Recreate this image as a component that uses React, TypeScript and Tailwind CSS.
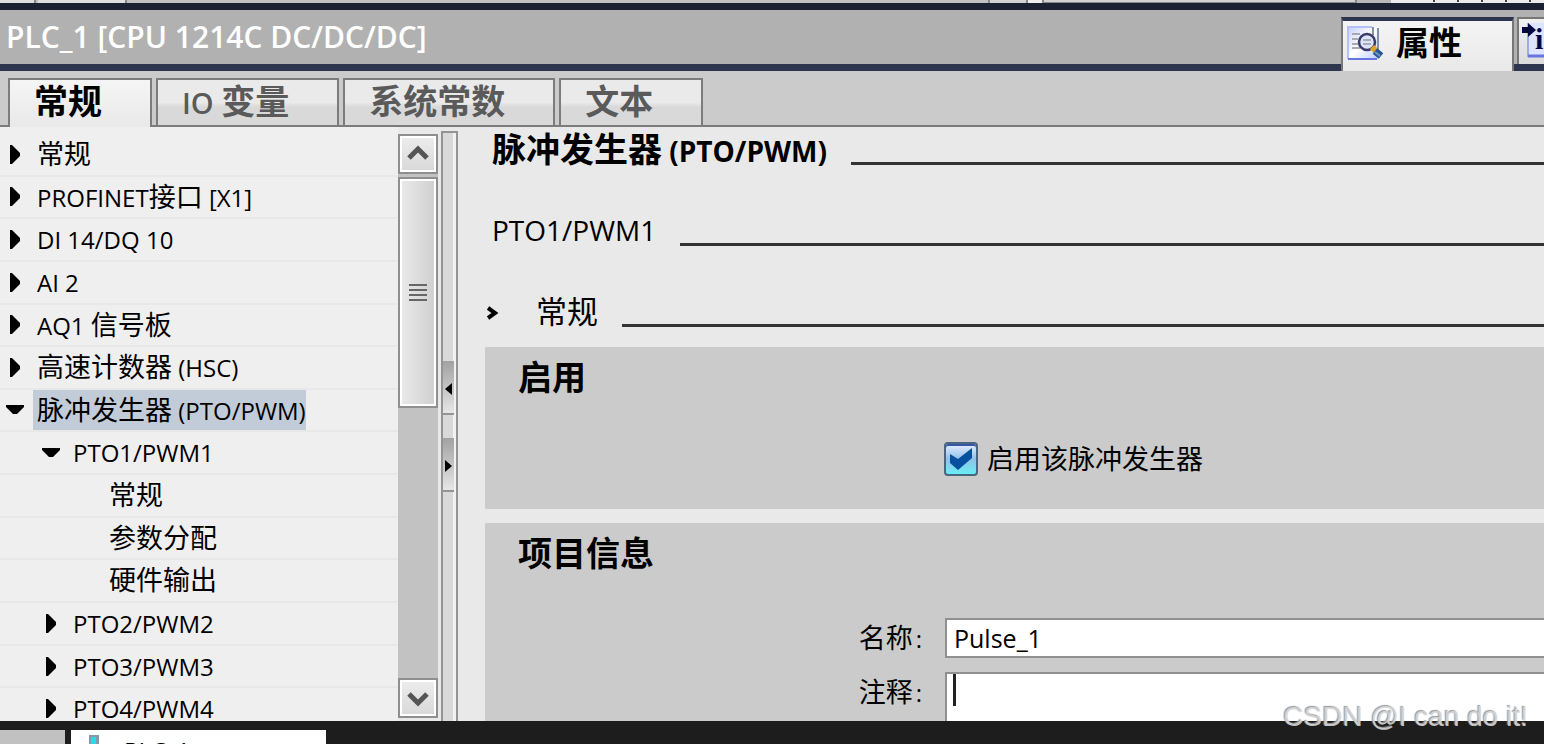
import { useState } from 'react';
import type { ReactNode } from 'react';

type TreeItem = { id: string; text: string; level: 0 | 1 | 2; state: 'closed' | 'open' | 'leaf' };

const treeItems: TreeItem[] = [
  { id: 'general', text: '常规', level: 0, state: 'closed' },
  { id: 'profinet', text: 'PROFINET接口 [X1]', level: 0, state: 'closed' },
  { id: 'di', text: 'DI 14/DQ 10', level: 0, state: 'closed' },
  { id: 'ai', text: 'AI 2', level: 0, state: 'closed' },
  { id: 'aq', text: 'AQ1 信号板', level: 0, state: 'closed' },
  { id: 'hsc', text: '高速计数器 (HSC)', level: 0, state: 'closed' },
  { id: 'pulse', text: '脉冲发生器 (PTO/PWM)', level: 0, state: 'open' },
  { id: 'pto1', text: 'PTO1/PWM1', level: 1, state: 'open' },
  { id: 'pto1-general', text: '常规', level: 2, state: 'leaf' },
  { id: 'pto1-params', text: '参数分配', level: 2, state: 'leaf' },
  { id: 'pto1-hw', text: '硬件输出', level: 2, state: 'leaf' },
  { id: 'pto2', text: 'PTO2/PWM2', level: 1, state: 'closed' },
  { id: 'pto3', text: 'PTO3/PWM3', level: 1, state: 'closed' },
  { id: 'pto4', text: 'PTO4/PWM4', level: 1, state: 'closed' },
];

const tabs = ['常规', 'IO 变量', '系统常数', '文本'];
const indents = ['pl-[10px]', 'pl-[46px]', 'pl-[82px]'];

export default function App() {
  return (
    <div className="relative flex h-screen flex-col overflow-hidden bg-[#e9e9e9] font-['Open_Sans','Noto_Sans_CJK_SC',sans-serif] text-black">
      <ToolbarEdge />
      <TitleBar />
      <TabRow />
      <main className="flex min-h-0 flex-1">
        <Navigation />
        <Splitter />
        <Settings />
      </main>
      <TaskStrip />
      <p className="pointer-events-none absolute right-4 bottom-3 font-['Liberation_Sans',sans-serif] text-[28px] leading-[30px] text-[#d6d6d6]/90 [text-shadow:-1px_-1px_1px_#9a9a9a]">
        CSDN @I can do it!
      </p>
    </div>
  );
}

// Latin runs are set smaller than the Chinese ones beside them
function Mixed({ text, latin }: { text: string; latin: string }) {
  return (
    <>
      {text.split(/([\u4e00-\u9fff]+)/).filter(Boolean).map((part, i) => (
        <span key={i} className={/[\u4e00-\u9fff]/.test(part) ? undefined : latin}>{part}</span>
      ))}
    </>
  );
}

function ToolbarEdge() {
  return (
    <div className="flex h-[10px] shrink-0 border-b-[7px] border-[#1b2033] bg-[#c1c1c1]">
      <div className="w-9 border-r-2 border-[#888] bg-[#dedede]" />
      <div className="ml-[2px] w-[89px] border-r-2 border-[#888] bg-[#dedede]" />
      <div className="flex-1" />
      <div className="w-[40px] border-x-2 border-[#888] bg-[#d2d2d2]" />
      <div className="w-[14px] bg-[#eee]" />
      <div className="w-[315px] border-x-2 border-b border-[#888] bg-[#d2d2d2]" />
      <div className="w-[34px] bg-[#b8b8b8]" />
      <div className="flex w-[153px] items-start gap-[22px] bg-[#ececec] pl-[42px]">
        {[0, 1, 2, 3, 4].map((n) => <i key={n} className="h-[2px] w-[2px] shrink-0 bg-[#444]" />)}
      </div>
    </div>
  );
}

function TitleBar() {
  return (
    <header className="flex h-[61px] shrink-0 items-end border-b-[7px] border-[#2d354f] bg-[#b1b1b1]">
      <h1 className="flex-1 self-center pl-[6px] text-[30px] leading-[54px] font-semibold whitespace-nowrap text-white">PLC_1 [CPU 1214C DC/DC/DC]</h1>
      <button type="button" className="relative -mb-[7px] flex h-[54px] w-[173px] shrink-0 items-center gap-[12px] border-x-2 border-t-4 border-x-[#777] border-t-[#2d354f] bg-linear-to-b from-[#f4f4f4] to-[#e9e9e9] pb-[6px] pl-[4px]">
        <PropertiesIcon />
        <span className="text-[33px] leading-[44px] font-bold">属性</span>
      </button>
      <button type="button" aria-label="信息" className="ml-[3px] flex h-[47px] w-[27px] shrink-0 overflow-hidden border-t-2 border-l-2 border-[#777] bg-linear-to-b from-[#f0f0f0] to-[#dcdcdc] pt-[2px] pl-[3px]">
        <InfoIcon />
      </button>
    </header>
  );
}

function TabRow() {
  const [active, setActive] = useState('常规');
  return (
    <nav className="flex h-[56px] shrink-0 items-end gap-[4px] border-b-2 border-[#7c7c7c] bg-[#cbcbcb] pl-[8px]">
      {tabs.map((tab) => (
        <button
          key={tab}
          type="button"
          onClick={() => setActive(tab)}
          className={`relative border-2 border-b-0 border-[#7c7c7c] pr-[48px] pl-[24px] text-[34px] leading-[42px] font-bold whitespace-nowrap ${tab === active ? '-mb-[2px] h-[49px] bg-linear-to-b from-[#f5f5f5] to-[#e9e9e9] pb-[5px] text-black' : 'h-[47px] bg-linear-to-b from-[#eaeaea] from-50% to-[#d9d9d9] to-60% pb-[3px] text-[#5a5a5a]'}`}
        >
          <Mixed text={tab} latin="text-[29px] font-semibold" />
        </button>
      ))}
    </nav>
  );
}

function Arrow({ state }: { state: TreeItem['state'] }) {
  if (state === 'leaf') return <span className="w-[23px] shrink-0" />;
  return (
    <span className="flex w-[23px] shrink-0 items-center">
      {state === 'open' ? (
        <svg width="20" height="10" viewBox="0 0 20 10" className="-ml-[4px]"><path d="M0 0h18v2l-7 7H7L0 2z" /></svg>
      ) : (
        <svg width="10" height="19" viewBox="0 0 10 19"><path d="M0 0h2l8 8v3l-8 8H0z" /></svg>
      )}
    </span>
  );
}

function Navigation() {
  const [selected, setSelected] = useState('pulse');
  return (
    <aside className="flex w-[438px] shrink-0 overflow-hidden">
      <ul className="-mb-[10px] flex flex-1 flex-col bg-[#efefef] pt-[7px]">
        {treeItems.map((item) => (
          <li key={item.id} className={`flex min-h-0 flex-1 items-stretch border-b-2 border-[#e8e8e8] ${indents[item.level]}`}>
            <button type="button" onClick={() => setSelected(item.id)} className="flex items-stretch text-[27px] leading-[40px] whitespace-nowrap">
              <Arrow state={item.state} />
              <span className={`h-[40px] pl-[4px] ${item.id === selected ? 'bg-[#c2ccd8]' : ''}`}>
                <Mixed text={item.text} latin="text-[24px]" />
              </span>
            </button>
          </li>
        ))}
      </ul>
      <div className="mt-[7px] mb-[3px] flex w-[40px] flex-col bg-[#c2c2c2]">
        <ScrollButton label="向上滚动" path="M3 15l9-9 9 9" />
        <div className="mt-[3px] flex h-[231px] flex-col items-center justify-center gap-[3px] border-2 border-[#8f8f8f] bg-linear-to-r from-[#eaeaea] to-[#cfcfcf] outline-2 -outline-offset-4 outline-white">
          {[0, 1, 2, 3].map((n) => <i key={n} className="h-[2px] w-[18px] bg-[#666]" />)}
        </div>
        <div className="flex-1" />
        <ScrollButton label="向下滚动" path="M3 7l9 9 9-9" />
      </div>
    </aside>
  );
}

function ScrollButton({ label, path }: { label: string; path: string }) {
  return (
    <button type="button" aria-label={label} className="flex h-[40px] w-[40px] shrink-0 items-center justify-center border-2 border-[#8f8f8f] bg-linear-to-b from-[#ededed] to-[#d8d8d8] outline-2 -outline-offset-4 outline-white">
      <svg width="24" height="22" viewBox="0 0 24 22" fill="none" stroke="#555" strokeWidth="5"><path d={path} /></svg>
    </button>
  );
}

function Splitter() {
  return (
    <div className="mt-[4px] ml-[3px] flex w-[17px] shrink-0 flex-col border-x-2 border-t-2 border-[#949494] bg-[#d9d9d9] pt-[228px] shadow-[inset_-3px_0_0_#f2f2f2]">
      <SplitButton label="收起" path="M7 0v12L0 6z" />
      <div className="h-[23px]" />
      <SplitButton label="展开" path="M0 0v12l7-6z" />
    </div>
  );
}

function SplitButton({ label, path }: { label: string; path: string }) {
  return (
    <button type="button" aria-label={label} className="flex h-[54px] w-[11px] shrink-0 items-center justify-center border-b-2 border-[#949494] bg-linear-to-b from-[#a2a2a2] to-[#e6e6e6] pt-[3px]">
      <svg width="7" height="12" viewBox="0 0 7 12"><path d={path} /></svg>
    </button>
  );
}

function Ruled({ children }: { children: ReactNode }) {
  return (
    <div className="flex h-[81px] items-start">
      {children}
      <div className="mt-[35px] ml-[24px] h-[3px] flex-1 bg-[#333]" />
    </div>
  );
}

function Settings() {
  const [enabled, setEnabled] = useState(true);
  const [name, setName] = useState('Pulse_1');
  return (
    <section className="flex min-w-0 flex-1 flex-col overflow-hidden pl-[27px]">
      <div className="h-[220px] shrink-0 pl-[7px]">
        <Ruled>
          <h2 className="text-[34px] leading-[44px] font-bold whitespace-nowrap"><Mixed text="脉冲发生器 (PTO/PWM)" latin="text-[28px]" /></h2>
        </Ruled>
        <Ruled>
          <h3 className="text-[28px] leading-[44px] whitespace-nowrap">PTO1/PWM1</h3>
        </Ruled>
        <Ruled>
          <svg width="12" height="14" viewBox="0 0 12 14" className="mt-[17px] mr-[37px] -ml-[5px]" fill="none" stroke="black" strokeWidth="4"><path d="M1 2l7 5-7 5" /></svg>
          <h3 className="text-[31px] leading-[44px] whitespace-nowrap">常规</h3>
        </Ruled>
      </div>

      <Panel title="启用">
        <label className="mt-[31px] ml-[459px] flex w-fit items-center gap-[9px] text-[27px] leading-[40px]">
          <span className="grid">
            <input
              type="checkbox"
              checked={enabled}
              onChange={(e) => setEnabled(e.target.checked)}
              className="peer col-start-1 row-start-1 h-[34px] w-[34px] appearance-none rounded-[4px] border-2 border-[#4b6480] bg-linear-to-b from-[#e9edff] via-[#8fc0ea] to-[#66eef5] shadow-[inset_0_2px_0_#3557a8]"
            />
            <svg width="34" height="34" viewBox="0 0 34 34" className="pointer-events-none col-start-1 row-start-1 hidden peer-checked:block"><path d="M6 12l8 5L28 6v10L14 28 6 21z" fill="#07509f" /></svg>
          </span>
          启用该脉冲发生器
        </label>
      </Panel>
      <div className="h-[14px] shrink-0" />
      <Panel title="项目信息">
        <div className="mt-[34px] flex items-center">
          <label htmlFor="name" className="w-[460px] shrink-0 pr-[23px] text-right text-[27px] leading-[39px]">名称<span className="pl-[3px] text-[24px]">:</span></label>
          <input id="name" value={name} onChange={(e) => setName(e.target.value)} className="h-[40px] min-w-0 flex-1 border-2 border-r-0 border-[#909090] bg-white pl-[7px] text-[25px] leading-[36px] outline-none" />
        </div>
        <div className="relative mt-[14px] flex items-start">
          <label htmlFor="comment" className="w-[460px] shrink-0 pr-[23px] text-right text-[27px] leading-[40px]">注释<span className="pl-[3px] text-[24px]">:</span></label>
          <textarea id="comment" className="h-[100px] min-w-0 flex-1 resize-none border-2 border-r-0 border-[#909090] bg-white pl-[7px] text-[25px] outline-none" />
          <i className="absolute top-[2px] left-[468px] h-[32px] w-[3px] bg-[#222]" />
        </div>
      </Panel>
    </section>
  );
}

function Panel({ title, children }: { title: string; children: ReactNode }) {
  return (
    <div className="min-h-[162px] shrink-0 bg-[#cbcbcb]">
      <h3 className="h-[61px] pt-[7px] pl-[33px] text-[34px] leading-[46px] font-bold">{title}</h3>
      {children}
    </div>
  );
}

function TaskStrip() {
  return (
    <footer className="flex h-[23px] shrink-0 gap-[6px] overflow-hidden bg-[#1d1d1d] pt-[9px]">
      <div className="h-[14px] w-[65px] bg-[#c1c1c1]" />
      <button type="button" className="flex h-[40px] w-[255px] items-start gap-[24px] bg-white pt-[5px] pl-[18px] text-[24px] leading-[32px]">
        <svg width="11" height="24" viewBox="0 0 11 24"><path d="M0 0h10v24H0z" fill="#8799a8" /><path d="M2 2h5v22H2z" fill="#25dde5" /></svg>
        PLC_1
      </button>
    </footer>
  );
}

function PropertiesIcon() {
  return (
    <svg width="37" height="36" viewBox="0 0 37 36" fill="none" className="shrink-0">
      <defs>
        <linearGradient id="sheet" x1="0" y1="0" x2="1" y2="1">
          <stop offset="0" stopColor="#c4d0ff" />
          <stop offset=".5" stopColor="#fff" />
          <stop offset="1" stopColor="#bccbff" />
        </linearGradient>
      </defs>
      <path d="M1 2h30v32H1z" fill="url(#sheet)" />
      <path d="M1 34V2h24" stroke="#b4c0f8" strokeWidth="2" />
      <path d="M1 34h29" stroke="#6675e0" strokeWidth="2" />
      <path d="M31 30V3M26 2v8" stroke="#8290a8" strokeWidth="2" />
      <path d="M5 9h8M5 14h6M5 19h6M5 23h8" stroke="#a8a8ae" strokeWidth="2" />
      <circle cx="20" cy="17" r="8" fill="#dce4fb" stroke="#3b3968" strokeWidth="2.5" />
      <path d="M16 15h8M16 19h8" stroke="#a6acba" strokeWidth="2" />
      <path d="M25 22l4 4" stroke="#e0a321" strokeWidth="6" />
      <path d="M28 26l6 5" stroke="#28548f" strokeWidth="7" />
      <path d="M28 27l5 4" stroke="#6d96c5" strokeWidth="2" />
    </svg>
  );
}

function InfoIcon() {
  return (
    <svg width="36" height="38" viewBox="0 0 36 38" className="shrink-0">
      <path d="M6 2h30v34H6z" fill="#dce4ff" />
      <path d="M6 36V2" stroke="#9aaaf5" strokeWidth="2" />
      <path d="M6 35h30" stroke="#6675e0" strokeWidth="3" />
      <path d="M0 6h6V2l8 7-8 7v-4H0z" fill="#07073f" />
      <text x="13" y="28" fill="#07073f" fontFamily="Liberation Serif, serif" fontWeight="bold" fontSize="30">i</text>
    </svg>
  );
}
